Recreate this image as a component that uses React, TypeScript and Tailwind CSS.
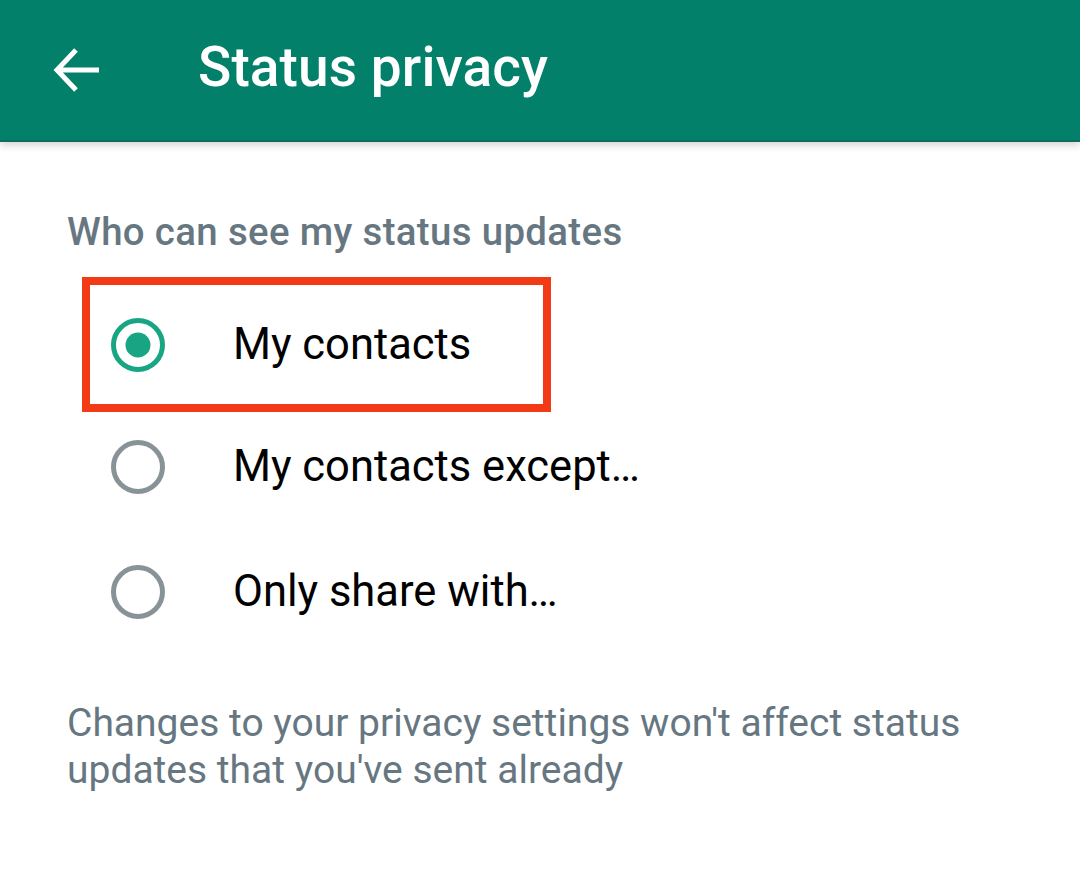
import React, { useState } from 'react';

const options = ['My contacts', 'My contacts except…', 'Only share with…'];

const Radio: React.FC<{ checked: boolean }> = ({ checked }) => (
  <svg width="56" height="56" viewBox="0 0 56 56" className="shrink-0">
    <circle
      cx="28"
      cy="28"
      r="24.5"
      fill="none"
      stroke={checked ? '#17a584' : '#889398'}
      strokeWidth="5"
    />
    {checked && <circle cx="28" cy="28" r="12.5" fill="#17a584" />}
  </svg>
);

export default function App() {
  const [selected, setSelected] = useState(0);

  return (
    <div className="w-[1080px] h-[872px] bg-white overflow-hidden" style={{ fontFamily: 'Roboto, "Noto Sans", sans-serif' }}>
      {/* App bar */}
      <div className="h-[142px] bg-[#028069] flex items-center shadow-[0_3px_8px_rgba(0,0,0,0.18)] border-b-2 border-[#0d6d5a] relative z-10">
        <button className="w-[48px] h-[48px] ml-[53px] flex items-center justify-center text-white">
          <svg width="48" height="46" viewBox="0 0 48 46" fill="none">
            <path d="M46 23H5M23 3L4 23l19 20" stroke="white" strokeWidth="5" strokeLinejoin="miter" />
          </svg>
        </button>
        <h1 className="ml-[97px] text-[55px] font-medium text-white tracking-[0.1px] leading-none pb-[6px]">
          Status privacy
        </h1>
      </div>

      <div className="px-[67px] pt-[68px]">
        <p className="text-[38.4px] font-medium text-[#667781] leading-[44px] tracking-[0.35px]">
          Who can see my status updates
        </p>

        <div className="mt-[23px] flex flex-col">
          {options.map((label, i) => (
            <div
              key={label}
              onClick={() => setSelected(i)}
              className={
                i === 0
                  ? 'h-[135px] w-[469px] ml-[15px] -mb-[8px] border-[8px] border-[#f23a17] flex items-center pl-[20px] cursor-pointer'
                  : 'h-[125px] flex items-center pl-[43px] cursor-pointer'
              }
            >
              <Radio checked={selected === i} />
              <span className="ml-[67px] text-[43.5px] text-black">
                {label}
              </span>
            </div>
          ))}
        </div>

        <p className="mt-[46px] text-[39px] text-[#667781] leading-[47px] max-w-[940px]">
          Changes to your privacy settings won't affect status updates that you've sent already
        </p>
      </div>
    </div>
  );
}
